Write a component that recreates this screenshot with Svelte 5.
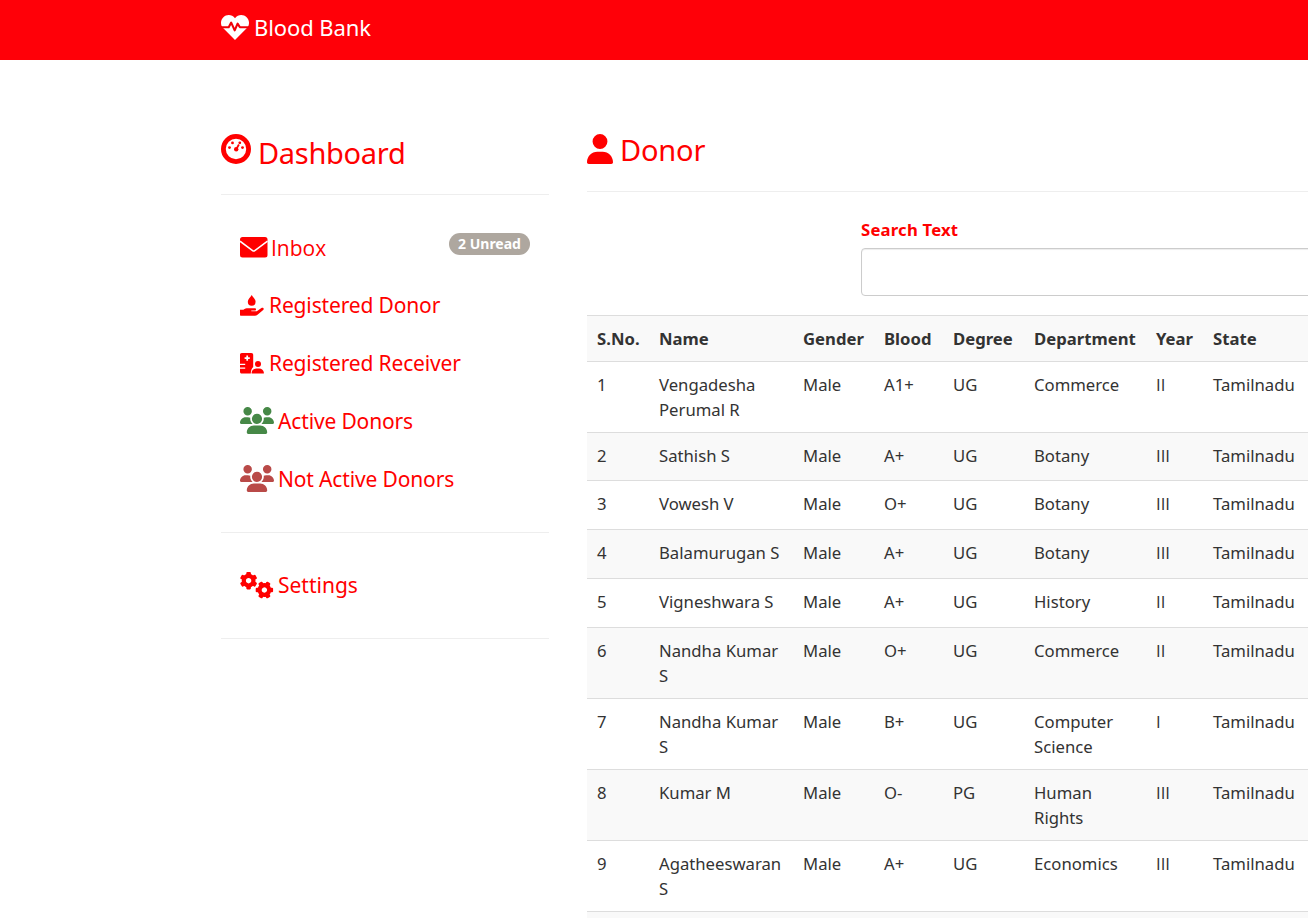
<script>
  const people = 'M144 0a80 80 0 1 1 0 160A80 80 0 1 1 144 0zM512 0a80 80 0 1 1 0 160A80 80 0 1 1 512 0zM0 298.7C0 239.8 47.8 192 106.7 192l42.7 0c15.9 0 31 3.5 44.6 9.7c-1.3 7.2-1.9 14.7-1.9 22.3c0 38.2 16.8 72.5 43.3 96c-.2 0-.4 0-.7 0L21.3 320C9.6 320 0 310.4 0 298.7zM405.3 320c-.2 0-.4 0-.7 0c26.6-23.5 43.3-57.8 43.3-96c0-7.6-.7-15-1.9-22.3c13.6-6.3 28.7-9.7 44.6-9.7l42.7 0C592.2 192 640 239.8 640 298.7c0 11.8-9.6 21.3-21.3 21.3l-213.3 0zM224 224a96 96 0 1 1 192 0 96 96 0 1 1 -192 0zM128 485.3C128 411.7 187.7 352 261.3 352l117.3 0C452.3 352 512 411.7 512 485.3c0 14.7-11.9 26.7-26.7 26.7l-330.7 0c-14.7 0-26.7-11.9-26.7-26.7z';
  const teeth = [0, 60, 120, 180, 240, 300];
  const columns = ['S.No.', 'Name', 'Gender', 'Blood', 'Degree', 'Department', 'Year', 'State'];
  const donors = [
    ['1', 'Vengadesha Perumal R', 'Male', 'A1+', 'UG', 'Commerce', 'II', 'Tamilnadu'],
    ['2', 'Sathish S', 'Male', 'A+', 'UG', 'Botany', 'III', 'Tamilnadu'],
    ['3', 'Vowesh V', 'Male', 'O+', 'UG', 'Botany', 'III', 'Tamilnadu'],
    ['4', 'Balamurugan S', 'Male', 'A+', 'UG', 'Botany', 'III', 'Tamilnadu'],
    ['5', 'Vigneshwara S', 'Male', 'A+', 'UG', 'History', 'II', 'Tamilnadu'],
    ['6', 'Nandha Kumar S', 'Male', 'O+', 'UG', 'Commerce', 'II', 'Tamilnadu'],
    ['7', 'Nandha Kumar S', 'Male', 'B+', 'UG', 'Computer Science', 'I', 'Tamilnadu'],
    ['8', 'Kumar M', 'Male', 'O-', 'PG', 'Human Rights', 'III', 'Tamilnadu'],
    ['9', 'Agatheeswaran S', 'Male', 'A+', 'UG', 'Economics', 'III', 'Tamilnadu']
  ];
</script>

<div class="page">
  <header class="navbar">
    <svg width="28" height="25" viewBox="0 0 28 25" aria-hidden="true">
      <path fill="#fff" d="M14 3.2C17-.8 22.6-.7 25.6 2.2c3 3 3.1 7.2.8 10.4L14 25 1.6 12.6C-.7 9.400-.6 5.200 2.400 2.200 5.400-.7 11-.8 14 3.200z" />
      <path fill="none" stroke="#f00008" stroke-width="2.1" stroke-linejoin="round" d="M0 12.300h7.700l2.500-4.700 3.500 7.800 2.900-6.800 2.300 3.700H28" />
    </svg>
    <span>Blood Bank</span>
  </header>

  <div class="body">
    <aside class="side">
      <h2 class="title dash">
        <svg width="30" height="30" viewBox="0 0 30 30" aria-hidden="true">
          <circle cx="15" cy="15" r="12.600" fill="none" stroke="currentColor" stroke-width="4.800" />
          <circle cx="8.500" cy="13.600" r="1.400" /><circle cx="11.500" cy="8.900" r="1.400" />
          <circle cx="18.800" cy="8.800" r="1.400" /><circle cx="21.500" cy="13.600" r="1.400" />
          <circle cx="15.200" cy="15.200" r="2.200" />
          <path d="M15.200 15.400l2.700-4.900" fill="none" stroke="currentColor" stroke-width="1.800" />
        </svg>
        <span>Dashboard</span>
      </h2>
      <nav class="menu">
        <a class="item inbox" href="#inbox">
          <svg width="28" height="21" viewBox="0 0 28 21" aria-hidden="true">
            <rect width="27.500" height="20.500" rx="2.500" />
            <path d="M0 4.200l12.600 9.500q1.100.8 2.200 0L27.500 4.200" fill="none" stroke="#fff" stroke-width="1.500" />
          </svg>
          <span class="label">Inbox</span>
          <span class="badge">2 Unread</span>
        </a>
        <a class="item donor" href="#donors">
          <svg width="24" height="21" viewBox="0 0 24 21" aria-hidden="true">
            <path d="M11.700 0c1.300 2.200 3.900 4.300 3.900 6.800a3.900 3.900 0 0 1-7.800 0C7.800 4.300 10.400 2.200 11.700 0z" />
            <path d="M0 14.800h3.400c1.600-1.300 2.800-1.600 4.800-1.600h6.600c1.600 0 1.600 2.400 0 2.400h-3.500v.7h5.500l4.600-3.200c1.700-1 3.100.7 1.800 1.900l-5.700 4.800c-.8.700-1.600 1-2.600 1H.7c-.5 0-.7-.2-.7-.7z" />
          </svg>
          <span>Registered Donor</span>
        </a>
        <a class="item receiver" href="#receivers">
          <svg width="24" height="21" viewBox="0 0 24 21" aria-hidden="true">
            <path d="M1.800 0h9.500c1.200 0 1.900.7 1.900 1.900V14c-1.700 1.400-2.300 3.500-2.400 6.500H1.800C.6 20.500 0 19.900 0 18.700v-3h5.200v-1.200H0v-2.600h5.200v-1.200H0V1.800C0 .7.700 0 1.800 0z" />
            <path d="M7.200 2.500v5.200M4.600 5.100h5.200" stroke="#fff" stroke-width="1.700" />
            <circle cx="18" cy="11" r="3" />
            <path d="M12.200 20.500c-.5 0-.7-.3-.6-.8.300-2.700 2.200-4.300 4.800-4.300h2.700c2.700 0 4.500 1.600 4.800 4.300.100.500-.1.800-.6.800z" />
          </svg>
          <span>Registered Receiver</span>
        </a>
        <a class="item active" href="#active">
          <svg width="34" height="27" viewBox="0 0 640 512" preserveAspectRatio="none" aria-hidden="true"><path fill="#468847" d={people} /></svg>
          <span>Active Donors</span>
        </a>
        <a class="item inactive" href="#inactive">
          <svg width="34" height="27" viewBox="0 0 640 512" preserveAspectRatio="none" aria-hidden="true"><path fill="#b94a48" d={people} /></svg>
          <span>Not Active Donors</span>
        </a>
      </nav>
      <div class="settings">
        <a class="item" href="#settings">
          <svg width="34" height="27" viewBox="0 0 34 27" aria-hidden="true">
            {#each [[8.600, 8.700, 0], [24.400, 18, 30]] as [x, y, turn]}
              <g transform={`translate(${x} ${y}) rotate(${turn})`}>
                <circle r="4.800" fill="none" stroke="currentColor" stroke-width="4.200" />
                {#each teeth as angle}
                  <rect x="-2.300" y="-8.700" width="4.600" height="3.500" rx="1.100" transform={`rotate(${angle})`} />
                {/each}
              </g>
            {/each}
          </svg>
          <span>Settings</span>
        </a>
      </div>
    </aside>

    <main class="content">
      <h2 class="title donor-title">
        <svg width="26" height="30" viewBox="0 0 448 512" preserveAspectRatio="none" aria-hidden="true">
          <path d="M224 256A128 128 0 1 0 224 0a128 128 0 1 0 0 256zm-45.700 48C79.800 304 0 383.800 0 482.300C0 498.700 13.300 512 29.700 512l388.600 0c16.400 0 29.700-13.300 29.700-29.700C448 383.800 368.200 304 269.700 304l-91.400 0z" />
        </svg>
        <span>Donor</span>
      </h2>
      <div class="search">
        <label for="search">Search Text</label>
        <input id="search" type="text" />
      </div>
      <table>
        <colgroup>
          <col class="c1" /><col class="c2" /><col class="c3" /><col class="c4" />
          <col class="c5" /><col class="c6" /><col class="c7" /><col />
        </colgroup>
        <thead>
          <tr>{#each columns as column}<th>{column}</th>{/each}</tr>
        </thead>
        <tbody>
          {#each donors as donor}
            <tr>{#each donor as value}<td>{value}</td>{/each}</tr>
          {/each}
          <tr>{#each columns as _}<td></td>{/each}</tr>
        </tbody>
      </table>
    </main>
  </div>
</div>

<style>
  :global(body) { margin: 0; background: #fff; }
  .page {
    height: 918px;
    overflow: hidden;
    font-family: "Noto Sans", "Open Sans", sans-serif;
    font-size: 16.700px;
    line-height: 25px;
    color: #333;
  }
  .navbar {
    display: flex;
    gap: 5px;
    box-sizing: border-box;
    height: 60px;
    padding: 15px 0 0 221px;
    background: #ff0008;
    color: #fff;
    font-size: 22px;
  }
  .navbar span { letter-spacing: -0.100px; }
  .body { display: flex; gap: 38px; padding-left: 221px; }
  .side { width: 328px; flex: none; color: #f00; }
  svg { display: block; flex: none; fill: currentColor; }
  .title {
    display: flex;
    box-sizing: border-box;
    margin: 0;
    padding-top: 74px;
    border-bottom: 1px solid #eee;
    font-size: 29px;
    font-weight: 400;
    line-height: 36px;
    color: #f00;
  }
  .dash { height: 135px; gap: 7px; letter-spacing: -0.300px; }
  .dash span { padding-top: 1px; }
  .donor-title { height: 132px; gap: 7px; letter-spacing: -0.200px; }
  .donor-title span { margin-top: -2px; }
  .menu { box-sizing: border-box; height: 338px; padding: 23px 19px 0; border-bottom: 1px solid #eee; }
  .item { display: flex; align-items: center; height: 58px; gap: 4px; color: #f00; font-size: 21px; letter-spacing: -0.150px; text-decoration: none; white-space: nowrap; }
  .donor, .receiver { gap: 5px; }
  .active svg, .inactive svg { margin-top: -2px; }
  .inbox { gap: 3px; }
  .label { padding-top: 2px; font-family: "Open Sans", sans-serif; letter-spacing: 0; }
  .badge {
    margin: -7px 0 0 auto;
    width: 81px;
    height: 22px;
    border-radius: 11px;
    background: #aea79f;
    color: #fff;
    font-size: 14px;
    font-weight: 700;
    letter-spacing: 0;
    line-height: 22px;
    text-align: center;
  }
  .settings { box-sizing: border-box; height: 106px; padding: 23px 19px 0; border-bottom: 1px solid #eee; }
  .settings .item { letter-spacing: 0; }
  .content { width: 900px; flex: none; }
  .search { box-sizing: border-box; height: 123px; padding: 25px 0 0 274px; }
  label { display: block; height: 31px; color: #f00; font-weight: 700; letter-spacing: 0.200px; }
  input {
    display: block;
    box-sizing: border-box;
    width: 600px;
    height: 48px;
    padding: 10px;
    border: 1px solid #ccc;
    border-radius: 4px;
    box-shadow: inset 0 1px 1px rgba(0, 0, 0, 0.075);
    font: inherit;
  }
  table { width: 100%; table-layout: fixed; border-collapse: separate; border-spacing: 0; }
  .c1 { width: 62px; }
  .c2 { width: 144px; }
  .c3 { width: 81px; }
  .c4 { width: 69px; }
  .c5 { width: 81px; }
  .c6 { width: 122px; }
  .c7 { width: 57px; }
  th, td {
    box-sizing: border-box;
    height: 49px;
    padding: 10px;
    border-top: 1px solid #ddd;
    text-align: left;
    vertical-align: top;
  }
  th { height: 46px; background: #f9f9f9; }
  td:nth-child(7) { font-family: "Open Sans", sans-serif; }
  tr:nth-child(2) td { height: 48px; }
  tbody tr:nth-child(even) td { background: #f9f9f9; }
</style>
